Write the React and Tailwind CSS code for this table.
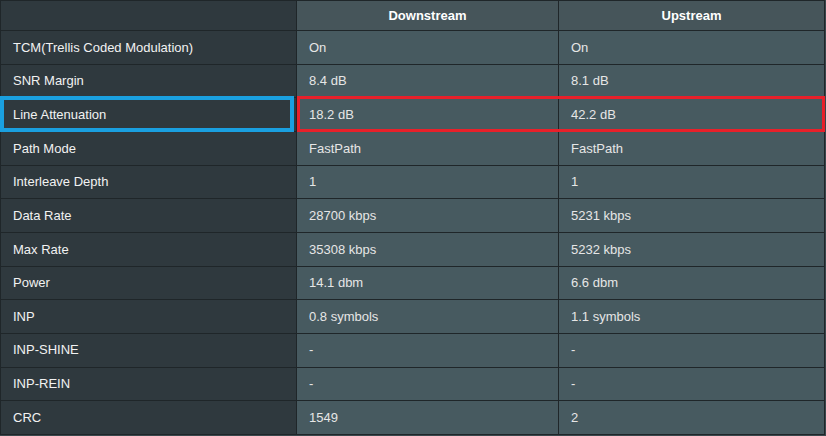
const rows = [
  ["TCM(Trellis Coded Modulation)", "On", "On"],
  ["SNR Margin", "8.4 dB", "8.1 dB"],
  ["Line Attenuation", "18.2 dB", "42.2 dB"],
  ["Path Mode", "FastPath", "FastPath"],
  ["Interleave Depth", "1", "1"],
  ["Data Rate", "28700 kbps", "5231 kbps"],
  ["Max Rate", "35308 kbps", "5232 kbps"],
  ["Power", "14.1 dbm", "6.6 dbm"],
  ["INP", "0.8 symbols", "1.1 symbols"],
  ["INP-SHINE", "-", "-"],
  ["INP-REIN", "-", "-"],
  ["CRC", "1549", "2"],
];

export default function App() {
  return (
    <div className="relative w-[826px] h-[436px] bg-[#3a474c] font-['Liberation_Sans',Arial,sans-serif] text-[13px]">
      <table className="w-[825px] border-collapse table-fixed border border-[#1f2629]">
        <colgroup>
          <col className="w-[296px]" />
          <col className="w-[262px]" />
          <col className="w-[266px]" />
        </colgroup>
        <thead>
          <tr className="h-[30px]">
            <th className="bg-[#2f393e] border border-[#1f2629]" />
            <th className="bg-[#46555a] border border-[#1f2629] text-center font-bold text-white">Downstream</th>
            <th className="bg-[#46555a] border border-[#1f2629] text-center font-bold text-white">Upstream</th>
          </tr>
        </thead>
        <tbody>
          {rows.map(([label, down, up]) => (
            <tr key={label} className="h-[33.67px]">
              <td className="bg-[#2f393e] border border-[#1f2629] pl-3 text-[#f2f2f2]">{label}</td>
              <td className="bg-[#475a60] border border-[#1f2629] pl-3 text-[#e6e6e6]">{down}</td>
              <td className="bg-[#475a60] border border-[#1f2629] pl-3 text-[#e6e6e6]">{up}</td>
            </tr>
          ))}
        </tbody>
      </table>
      {/* highlight boxes over the Line Attenuation row */}
      <div className="absolute left-0 top-[96px] w-[294px] h-[36px] border-4 border-[#1aa0e0]" />
      <div className="absolute left-[297px] top-[96px] w-[528px] h-[36px] border-[3px] border-[#e8202a]" />
    </div>
  );
}
